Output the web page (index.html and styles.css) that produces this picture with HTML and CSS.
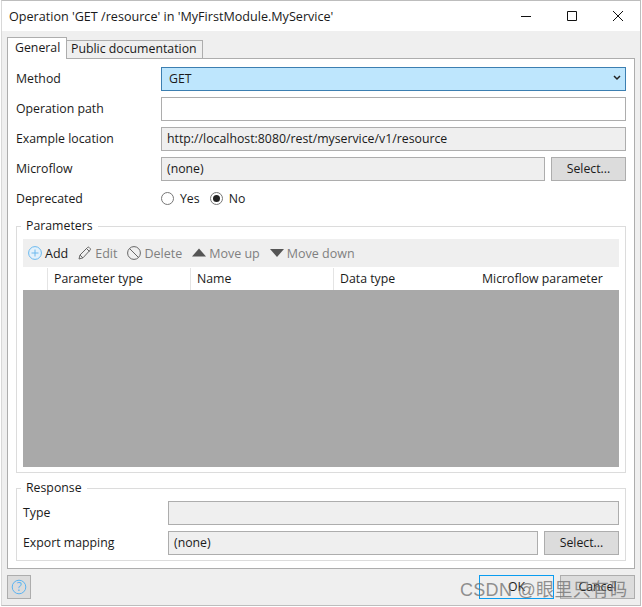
FILE: index.html
```html
<!DOCTYPE html>
<html lang="en">
<head>
  <meta charset="UTF-8" />
  <title>Operation</title>
  <link rel="stylesheet" href="styles.css">
</head>
<body>
  <div class="window">
    <div class="titlebar">
      <span class="title">Operation 'GET /resource' in 'MyFirstModule.MyService'</span>
      <div class="controls">
        <svg width="12" height="12" viewBox="0 0 12 12"><path d="M1 6.5h10" stroke="#111" fill="none"/></svg>
        <svg width="12" height="12" viewBox="0 0 12 12"><path d="M1.5 1.5h9v9h-9z" stroke="#111" fill="none"/></svg>
        <svg width="12" height="12" viewBox="0 0 12 12"><path d="M1 1l10 10M11 1L1 11" stroke="#111" fill="none"/></svg>
      </div>
    </div>

    <div class="content">
      <div class="tabs">
        <div class="tab active">General</div>
        <div class="tab">Public documentation</div>
      </div>

      <div class="panel">
        <div class="row">
          <label>Method</label>
          <div class="field select"><span>GET</span>
            <svg width="8" height="6" viewBox="0 0 8 6"><path d="M1 1l3 3 3-3" stroke="#222" stroke-width="1.5" fill="none"/></svg>
          </div>
        </div>
        <div class="row">
          <label>Operation path</label>
          <div class="field white"></div>
        </div>
        <div class="row">
          <label>Example location</label>
          <div class="field">http://localhost:8080/rest/myservice/v1/resource</div>
        </div>
        <div class="row">
          <label>Microflow</label>
          <div class="field">(none)</div>
          <button class="btn">Select...</button>
        </div>
        <div class="row radios">
          <label>Deprecated</label>
          <span class="radio"></span><span class="radio-text">Yes</span>
          <span class="radio checked"></span><span class="radio-text">No</span>
        </div>

        <fieldset class="params">
          <legend>Parameters</legend>
          <div class="toolbar">
            <div class="tool enabled">
              <svg width="14" height="14" viewBox="0 0 14 14"><circle cx="7" cy="7" r="6.4" fill="#e3f1fb" stroke="#6cb9ee"/><path d="M7 3.5v7M3.5 7h7" stroke="#6cb9ee" fill="none"/></svg>
              Add
            </div>
            <div class="tool">
              <svg width="14" height="14" viewBox="0 0 14 14"><path d="M1 13l1-4 7.5-7.5a1.2 1.2 0 0 1 1.7 0l1 1a1.2 1.2 0 0 1 0 1.500L5 11.800zM2 9l3 3M8.500 2.500l3 3" stroke="#666" fill="none"/></svg>
              Edit
            </div>
            <div class="tool">
              <svg width="14" height="14" viewBox="0 0 14 14"><circle cx="7" cy="7" r="6.400" fill="none" stroke="#666"/><path d="M2.500 2.500l9 9" stroke="#666" fill="none"/></svg>
              Delete
            </div>
            <div class="tool">
              <svg width="14" height="14" viewBox="0 0 14 14"><path d="M7 2.500l7 8H0z" fill="#555"/></svg>
              Move up
            </div>
            <div class="tool">
              <svg width="14" height="14" viewBox="0 0 14 14"><path d="M0 3h14l-7 8z" fill="#555"/></svg>
              Move down
            </div>
          </div>
          <div class="grid-head">
            <div class="col-check"></div>
            <div class="col">Parameter type</div>
            <div class="col">Name</div>
            <div class="col no-sep">Data type</div>
            <div class="col last">Microflow parameter</div>
          </div>
          <div class="grid-body"></div>
        </fieldset>

        <fieldset class="response">
          <legend>Response</legend>
          <div class="row">
            <label>Type</label>
            <div class="field"></div>
          </div>
          <div class="row">
            <label>Export mapping</label>
            <div class="field">(none)</div>
            <button class="btn">Select...</button>
          </div>
        </fieldset>
      </div>

      <div class="footer">
        <button class="btn help">
          <svg width="16" height="16" viewBox="0 0 16 16"><circle cx="8" cy="8" r="6.800" fill="none" stroke="#5cb4f2"/><text x="8" y="12" class="help-mark">?</text></svg>
        </button>
        <div class="footer-right">
          <button class="btn ok">OK</button>
          <button class="btn">Cancel</button>
        </div>
      </div>
    </div>
  </div>
  <div class="watermark">CSDN @眼里只有码</div>
</body>
</html>
```

FILE: styles.css
```css
* {
  box-sizing: border-box;
}

html, body {
  margin: 0;
  background: #fff;
}

body {
  position: relative;
  width: 642px;
  height: 607px;
  overflow: hidden;
  font-family: 'Open Sans', 'Noto Sans', sans-serif;
  font-size: 12.3px;
  color: #1a1a1a;
}

.window {
  width: 640px;
  height: 606px;
  margin-left: 1px;
  border: 1px solid #bdbdbd;
  border-left-color: #d8d8d8;
  display: flex;
  flex-direction: column;
}

.titlebar {
  height: 30px;
  flex: none;
  background: #fff;
  display: flex;
  align-items: center;
  justify-content: space-between;
  padding: 0 16px 0 7px;
}

.title {
  font-size: 12.6px;
}

.controls {
  display: flex;
  gap: 34px;
}

.content {
  flex: 1;
  background: #efefef;
  padding: 6px 5px 0 5px;
  display: flex;
  flex-direction: column;
}

.tabs {
  display: flex;
  align-items: flex-end;
  height: 22px;
  position: relative;
  z-index: 1;
}

.tab {
  height: 19px;
  padding: 0 5px 2px 4px;
  border: 1px solid #adadad;
  border-left: none;
  display: flex;
  align-items: center;
  background: #efefef;
}

.tab.active {
  height: 22px;
  width: 60px;
  padding: 0 0 2px 7px;
  background: #fff;
  border-left: 1px solid #adadad;
  border-bottom: none;
}

.panel {
  height: 511px;
  margin-top: -1px;
  background: #fff;
  border: 1px solid #adadad;
  padding: 8px;
}

.row {
  display: flex;
  align-items: center;
  gap: 6px;
  height: 24px;
  margin-bottom: 6px;
}

.row label {
  width: 139px;
  flex: none;
  padding-bottom: 2px;
}

.field {
  flex: 1;
  height: 24px;
  background: #efefef;
  border: 1px solid #adadad;
  padding: 0 5px 2px;
  display: flex;
  align-items: center;
  white-space: nowrap;
}

.field.white {
  background: #fff;
}

.select {
  background: #bee6fd;
  border-color: #3c7fb1;
  padding: 0 4px 2px 7px;
  justify-content: space-between;
}

.btn {
  width: 75px;
  height: 24px;
  flex: none;
  background: #dcdcdc;
  border: 1px solid #adadad;
  padding: 0 0 2px;
  font: inherit;
  color: inherit;
}

.radios {
  gap: 0;
  margin-bottom: 0;
  height: 22px;
  margin-top: 6px;
}

.radios label {
  width: 145px;
  padding-bottom: 0;
}

.radio {
  width: 13px;
  height: 13px;
  border: 1px solid #777;
  border-radius: 50%;
  background: #fff;
  margin-right: 6px;
  display: flex;
  align-items: center;
  justify-content: center;
}

.radio.checked::after {
  content: "";
  width: 7px;
  height: 7px;
  border-radius: 50%;
  background: #222;
}

.radio-text {
  margin-right: 10px;
}

fieldset {
  margin: 0;
  padding: 0 6px;
  border: 1px solid #dcdcdc;
  min-width: 0;
}

legend {
  padding: 0 5px;
  margin-left: -2px;
  line-height: 16px;
}

.params {
  margin-top: 9px;
  height: 255px;
  padding-top: 5px;
}

.toolbar {
  height: 28px;
  background: #efefef;
  display: flex;
  align-items: center;
  gap: 10px;
  padding-left: 5px;
  color: #808080;
  font-size: 12.5px;
}

.tool {
  display: flex;
  align-items: center;
  gap: 3px;
}

.tool.enabled {
  color: #1a1a1a;
}

.grid-head {
  height: 22px;
  margin-top: 1px;
  background: #fff;
  display: flex;
}

.col-check {
  width: 25px;
  border-right: 1px solid #e4e4e4;
}

.col {
  width: 143px;
  padding: 0 0 2px 6px;
  border-right: 1px solid #e4e4e4;
  display: flex;
  align-items: center;
}

.col.no-sep {
  border-right: none;
}

.col.last {
  width: 142px;
  border-right: none;
  padding-left: 5px;
  white-space: nowrap;
}

.grid-body {
  height: 177px;
  background: #a9a9a9;
}

.response {
  margin-top: 7px;
  height: 81px;
  padding-top: 5px;
}

.footer {
  display: flex;
  justify-content: space-between;
  margin-top: 6px;
}

.footer-right {
  display: flex;
  gap: 6px;
}

.help.btn {
  width: 24px;
  padding: 0;
  display: flex;
  align-items: center;
  justify-content: center;
}

.help-mark {
  font-size: 12px;
  fill: #5cb4f2;
  text-anchor: middle;
}

.ok {
  background: #efefef;
  border-color: #0a9cf0;
}

.watermark {
  position: absolute;
  left: 460px;
  top: 577px;
  font-family: 'Liberation Sans', 'Noto Sans CJK SC', sans-serif;
  font-size: 18px;
  line-height: 26px;
  letter-spacing: 0.3px;
  color: rgba(110, 110, 110, 0.75);
  white-space: nowrap;
}
```
